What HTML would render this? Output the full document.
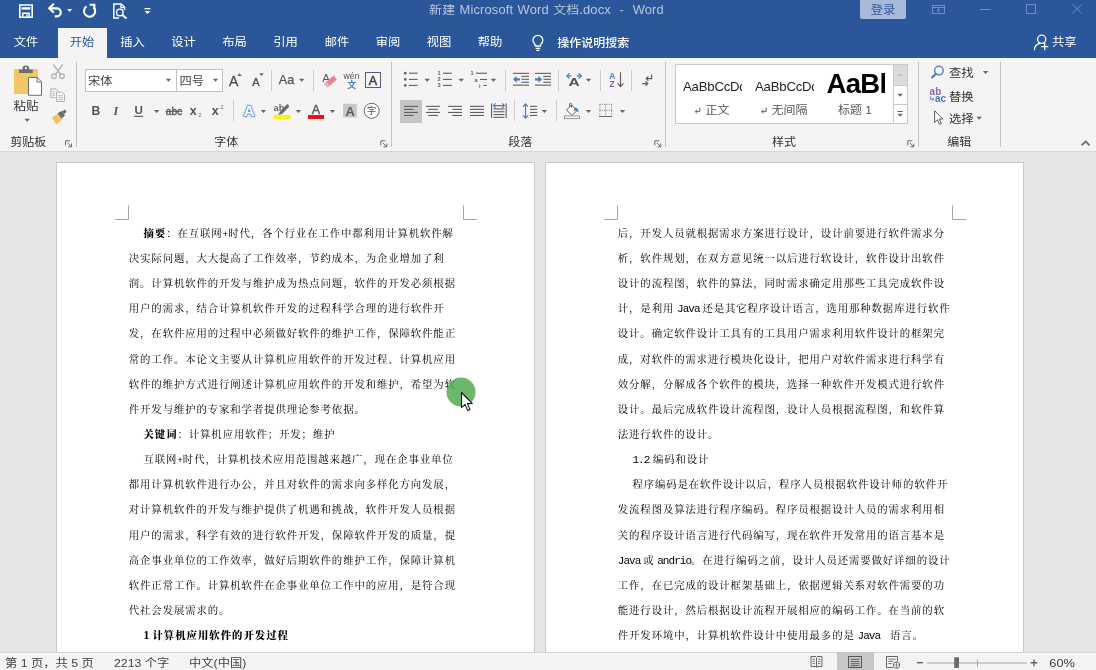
<!DOCTYPE html>
<html lang="zh-CN"><head><meta charset="utf-8"><title>新建 Microsoft Word 文档.docx - Word</title>
<style>
*{box-sizing:border-box;margin:0;padding:0}
html,body{width:1096px;height:670px;overflow:hidden;background:#e6e6e6}
body{font-family:"Liberation Sans","Noto Sans CJK SC",sans-serif;font-size:12px;color:#444;position:relative}
#app{position:absolute;left:0;top:0;width:1096px;height:670px;overflow:hidden}
#app div,#app svg{position:absolute;white-space:nowrap}
#txt{left:0;top:0;width:1096px;height:670px;will-change:transform}
#titlebar{left:0;top:0;width:1096px;height:58px;background:#2b579a}
#ribbon{left:0;top:58px;width:1096px;height:93px;background:#f5f3f4}
#rline{left:0;top:151px;width:1096px;height:1px;background:#d8d6d7}
#doc{left:0;top:152px;width:1096px;height:500px;background:#e6e6e6}
#status{left:0;top:652px;width:1096px;height:18px;background:#f5f3f4;border-top:1px solid #d6d4d5}
.page{background:#fff;border:1px solid #c8c8c8}
.t{font-size:12.3px;line-height:16px;height:16px;color:#444;transform:scaleY(0.92);transform-origin:50% 50%}
.c{text-align:center}
.w{color:#fff}
.ln{font-family:"Liberation Mono","Noto Serif CJK SC",serif;font-size:10.4px;letter-spacing:0.89px;line-height:16px;height:16px;color:#000}
.ln b{font-weight:900;letter-spacing:0.98px}
.ln b i{font-family:"Liberation Serif",serif;font-size:11.6px;font-weight:700;letter-spacing:0;word-spacing:0.4px}
.ln i{font-style:normal;font-size:11px;letter-spacing:-0.975px;word-spacing:-2.8px}
.vsep{width:1px;background:#c9c7c8}
#ov{left:0;top:0;pointer-events:none}
#ov text{font-family:"Liberation Sans","Noto Sans CJK SC",sans-serif}
</style></head>
<body><div id="app">
<div id="titlebar"></div>
<div style="left:58px;top:28px;width:49px;height:30px;background:#f5f3f4"></div>
<div style="left:860px;top:0;width:46px;height:19px;background:#a8bad8;border-radius:0 0 2px 2px"></div>
<div id="ribbon"></div><div id="rline"></div>
<div style="left:85px;top:69px;width:91.5px;height:23px;background:#fff;border:1px solid #c4c2c3"></div>
<div style="left:176px;top:69px;width:47px;height:23px;background:#fff;border:1px solid #c4c2c3"></div>
<div style="left:675px;top:64px;width:232.5px;height:59.5px;background:#fff;border:1px solid #cbc9ca"></div>
<div style="left:893px;top:64px;width:14.5px;height:22px;background:#dcdadb;border:1px solid #cbc9ca"></div>
<div style="left:893px;top:85px;width:14.5px;height:20px;background:#fff;border:1px solid #cbc9ca"></div>
<div style="left:893px;top:104px;width:14.5px;height:19.5px;background:#fff;border:1px solid #cbc9ca"></div>
<div id="doc"></div>
<div class="page" style="left:56px;top:162px;width:479px;height:500px"></div>
<div class="page" style="left:545px;top:162px;width:479px;height:500px"></div>
<div id="status"></div>
<div style="left:836.5px;top:652px;width:37.5px;height:18px;background:#c8c6c7"></div>
<div id="txt">
<div class="t c" style="left:346.5px;width:400px;top:2px;color:#b9c6de;font-size:12.9px;letter-spacing:0.16px;word-spacing:0.6px">新建 Microsoft Word 文档.docx &nbsp;- &nbsp;Word</div>
<div class="t c " style="left:843px;top:1.8px;width:80px;color:#36599a;font-size:12.3px">登录</div>
<div class="t c w" style="left:-14px;top:34px;width:80px;">文件</div>
<div class="t c " style="left:42px;top:34px;width:80px;color:#2b579a">开始</div>
<div class="t c w" style="left:92.5px;top:34px;width:80px;">插入</div>
<div class="t c w" style="left:143.5px;top:34px;width:80px;">设计</div>
<div class="t c w" style="left:194.5px;top:34px;width:80px;">布局</div>
<div class="t c w" style="left:245.5px;top:34px;width:80px;">引用</div>
<div class="t c w" style="left:297px;top:34px;width:80px;">邮件</div>
<div class="t c w" style="left:348px;top:34px;width:80px;">审阅</div>
<div class="t c w" style="left:399px;top:34px;width:80px;">视图</div>
<div class="t c w" style="left:450px;top:34px;width:80px;">帮助</div>
<div class="t c w" style="left:543.3px;top:35.1px;width:100px;font-weight:500;font-size:12px">操作说明搜索</div>
<div class="t c w" style="left:1024.3px;top:34px;width:80px;">共享</div>
<div class="t c " style="left:-14px;top:97.8px;width:80px;font-size:12.5px;color:#333">粘贴</div>
<div class="t c " style="left:-11.7px;top:134px;width:80px;font-size:12px;color:#333">剪贴板</div>
<div class="t " style="left:88px;top:73.3px;font-size:12.3px;color:#444">宋体</div>
<div class="t " style="left:179.5px;top:73.3px;font-size:12.3px;color:#444">四号</div>
<div class="t c " style="left:186.3px;top:134px;width:80px;font-size:12px;color:#333">字体</div>
<div class="t c " style="left:480.2px;top:134px;width:80px;font-size:12px;color:#333">段落</div>
<div style="left:683px;top:78px;width:58.6px;height:18px;overflow:hidden;font-size:13.2px;line-height:18px;color:#262626;letter-spacing:-0.22px">AaBbCcDd</div>
<div style="left:755px;top:78px;width:58.6px;height:18px;overflow:hidden;font-size:13.2px;line-height:18px;color:#262626;letter-spacing:-0.22px">AaBbCcDd</div>
<div style="left:826.5px;top:66px;width:58.3px;height:36px;overflow:hidden;font-size:27.5px;line-height:36px;font-weight:bold;color:#000;letter-spacing:-0.7px">AaBb</div>
<div class="t " style="left:705.4px;top:102.1px;font-size:12px;color:#555">正文</div>
<div class="t " style="left:771.4px;top:102.1px;font-size:12px;color:#555">无间隔</div>
<div class="t " style="left:838px;top:102.1px;font-size:12px;color:#555">标题 1</div>
<div class="t c " style="left:744px;top:134px;width:80px;font-size:12px;color:#333">样式</div>
<div class="t " style="left:949px;top:65.3px;font-size:12.3px;color:#333">查找</div>
<div class="t " style="left:949px;top:88.5px;font-size:12.3px;color:#333">替换</div>
<div class="t " style="left:949px;top:110.7px;font-size:12.3px;color:#333">选择</div>
<div class="t c " style="left:919.3px;top:134px;width:80px;font-size:12px;color:#333">编辑</div>
<div class="ln" style="left:143.4px;top:226px"><b>摘要</b>：在互联网<i style="font-size:9.4px;letter-spacing:-0.015px">+</i>时代，各个行业在工作中都利用计算机软件解</div>
<div class="ln" style="left:128.8px;top:251px">决实际问题，大大提高了工作效率，节约成本，为企业增加了利</div>
<div class="ln" style="left:128.8px;top:276px">润。计算机软件的开发与维护成为热点问题，软件的开发必须根据</div>
<div class="ln" style="left:128.8px;top:301px">用户的需求，结合计算机软件开发的过程科学合理的进行软件开</div>
<div class="ln" style="left:128.8px;top:326px">发，在软件应用的过程中必须做好软件的维护工作，保障软件能正</div>
<div class="ln" style="left:128.8px;top:352px">常的工作。本论文主要从计算机应用软件的开发过程、计算机应用</div>
<div class="ln" style="left:128.8px;top:377px">软件的维护方式进行阐述计算机应用软件的开发和维护，希望为软</div>
<div class="ln" style="left:128.8px;top:402px">件开发与维护的专家和学者提供理论参考依据。</div>
<div class="ln" style="left:143.4px;top:427px"><b>关键词</b>：计算机应用软件；开发；维护</div>
<div class="ln" style="left:143.4px;top:452px">互联网<i style="font-size:9.4px;letter-spacing:-0.015px">+</i>时代，计算机技术应用范围越来越广，现在企事业单位</div>
<div class="ln" style="left:128.8px;top:477px">都用计算机软件进行办公，并且对软件的需求向多样化方向发展，</div>
<div class="ln" style="left:128.8px;top:502px">对计算机软件的开发与维护提供了机遇和挑战，软件开发人员根据</div>
<div class="ln" style="left:128.8px;top:528px">用户的需求，科学有效的进行软件开发，保障软件开发的质量，提</div>
<div class="ln" style="left:128.8px;top:553px">高企事业单位的工作效率，做好后期软件的维护工作，保障计算机</div>
<div class="ln" style="left:128.8px;top:578px">软件正常工作。计算机软件在企事业单位工作中的应用，是符合现</div>
<div class="ln" style="left:128.8px;top:603px">代社会发展需求的。</div>
<div class="ln" style="left:143.4px;top:628px"><b><i>1 </i>计算机应用软件的开发过程</b></div>
<div class="ln" style="left:617.8px;top:226px">后，开发人员就根据需求方案进行设计，设计前要进行软件需求分</div>
<div class="ln" style="left:617.8px;top:251px">析，软件规划，在双方意见统一以后进行软设计，软件设计出软件</div>
<div class="ln" style="left:617.8px;top:276px">设计的流程图，软件的算法，同时需求确定用那些工具完成软件设</div>
<div class="ln" style="left:617.8px;top:301px">计，是利用<i> Java </i>还是其它程序设计语言，选用那种数据库进行软件</div>
<div class="ln" style="left:617.8px;top:326px">设计。确定软件设计工具有的工具用户需求利用软件设计的框架完</div>
<div class="ln" style="left:617.8px;top:352px">成，对软件的需求进行模块化设计，把用户对软件需求进行科学有</div>
<div class="ln" style="left:617.8px;top:377px">效分解，分解成各个软件的模块，选择一种软件开发模式进行软件</div>
<div class="ln" style="left:617.8px;top:402px">设计。最后完成软件设计流程图，设计人员根据流程图，和软件算</div>
<div class="ln" style="left:617.8px;top:427px">法进行软件的设计。</div>
<div class="ln" style="left:632.4px;top:452px"><i style="word-spacing:-2px">1.2 </i>编码和设计</div>
<div class="ln" style="left:632.4px;top:477px">程序编码是在软件设计以后，程序人员根据软件设计师的软件开</div>
<div class="ln" style="left:617.8px;top:502px">发流程图及算法进行程序编码。程序员根据设计人员的需求利用相</div>
<div class="ln" style="left:617.8px;top:528px">关的程序设计语言进行代码编写，现在软件开发常用的语言基本是</div>
<div class="ln" style="left:617.8px;top:553px"><i>Java </i>或<i> andrio</i>。在进行编码之前，设计人员还需要做好详细的设计</div>
<div class="ln" style="left:617.8px;top:578px">工作，在已完成的设计框架基础上，依据逻辑关系对软件需要的功</div>
<div class="ln" style="left:617.8px;top:603px">能进行设计，然后根据设计流程开展相应的编码工作。在当前的软</div>
<div class="ln" style="left:617.8px;top:628px">件开发环境中，计算机软件设计中使用最多的是<i> Java </i>&nbsp;语言。</div>
<div class="t " style="left:5px;top:654.8px;font-size:12.3px;color:#444">第 1 页，共 5 页</div>
<div class="t " style="left:114px;top:654.8px;font-size:12.3px;color:#444">2213 个字</div>
<div class="t " style="left:189px;top:654.8px;font-size:12.3px;color:#444">中文(中国)</div>
<div class="t " style="left:1049.3px;top:654.6px;font-size:12.8px;color:#3a3a3a">60%</div>
<svg id="ov" width="1096" height="670" viewBox="0 0 1096 670">
<g fill="none" stroke="#fff" stroke-width="1.6"><path d="M19.8 5 H32.2 V17.2 H19.8 Z"/><path d="M21.6 8.4 H30.4" stroke-width="2.4"/><path d="M22.8 17.2 V13.2 H29.2 V17.2" stroke-width="1.5"/></g>
<rect x="26.2" y="14.4" width="1.5" height="2.4" fill="#fff"/>
<g fill="none" stroke="#fff" stroke-width="2.2" stroke-linecap="butt"><path d="M53.8 3.8 L49.3 8.3 L53.8 12.8"/><path d="M49.8 8.3 H56.8 a4 4 0 0 1 0 8 H54.8"/></g>
<path d="M67.1 9.1 h5 l-2.5 2.8 z" fill="#fff"/>
<g fill="none" stroke="#fff" stroke-width="2"><path d="M86.6 6.4 A5.6 5.6 0 1 0 93.6 7.2"/><path d="M89.6 4.8 H94.4 V9.6"/></g>
<g fill="none" stroke="#fff" stroke-width="1.4"><path d="M119 18 H113.8 V4 H121.3 L124.6 7.3 V10"/><path d="M121 4 V7.6 H124.6"/><circle cx="119.8" cy="12.4" r="3.3"/><path d="M122.3 14.9 L126.6 18.6" stroke-width="2"/></g>
<rect x="144.6" y="8" width="5.8" height="1.3" fill="#fff"/>
<path d="M144.6 11 h5.8 l-2.9 3 z" fill="#fff"/>
<g fill="none" stroke="#fff" stroke-width="1.3"><path d="M535.3 46 C535.3 43.8 533 43 533 40.2 A4.9 4.9 0 0 1 542.8 40.2 C542.8 43 540.5 43.8 540.5 46 Z"/><path d="M535.6 48.3 H540.2 M536.3 50.4 H539.5"/></g>
<g fill="none" stroke="#708cc0" stroke-width="1"><rect x="932.5" y="5.5" width="12" height="8"/><path d="M932.5 7.5 H944.5"/><path d="M938.5 12.5 V9 M936.7 10.6 L938.5 8.8 L940.3 10.6"/></g>
<rect x="980" y="9" width="10.5" height="1" fill="#708cc0"/>
<rect x="1026.5" y="4.5" width="9" height="9" fill="none" stroke="#708cc0" stroke-width="1"/>
<path d="M1072.6 4.3 L1081.8 13.5 M1081.8 4.3 L1072.6 13.5" stroke="#708cc0" stroke-width="1" fill="none"/>
<g fill="none" stroke="#fff" stroke-width="1.3"><circle cx="1041.7" cy="39.3" r="4.1"/><path d="M1034.3 50.2 C1034.3 46 1037.2 43.4 1040.5 43.4"/><path d="M1044.7 43 V50.2 M1041.1 46.6 H1048.3"/></g>
<rect x="76" y="62" width="1" height="85" fill="#c3c1c2"/>
<rect x="391" y="62" width="1" height="85" fill="#c3c1c2"/>
<rect x="665" y="62" width="1" height="85" fill="#c3c1c2"/>
<rect x="918" y="62" width="1" height="85" fill="#c3c1c2"/>
<rect x="1000" y="62" width="1" height="85" fill="#c3c1c2"/>
<rect x="14" y="69" width="24" height="25" rx="1" fill="#f0c766"/>
<path d="M19 73 V69.6 H22.6 V68.2 Q22.6 65.6 25.9 65.6 Q29.2 65.6 29.2 68.2 V69.6 H32.8 V73 Z" fill="#6d6d6d"/><rect x="24.9" y="67.2" width="2" height="1.9" fill="#f5f3f4"/>
<path d="M28.5 77.5 H37.2 L41.5 81.8 V95.3 H28.5 Z" fill="#fff" stroke="#6d6d6d" stroke-width="1"/><path d="M37 77.6 V82 H41.4" fill="none" stroke="#6d6d6d" stroke-width="1"/>
<path d="M24.5 118.8 h5.4 l-2.7 3 z" fill="#666"/>
<g fill="none" stroke="#b4b2b3" stroke-width="1.3"><path d="M53.3 64.5 L61 75 M62.7 64.5 L55 75"/><circle cx="54" cy="76.2" r="2.3"/><circle cx="62" cy="76.2" r="2.3"/></g>
<g fill="none" stroke="#b4b2b3" stroke-width="1"><path d="M55.5 97.5 H50.8 V88.8 H56 L58.5 91.3"/><path d="M56.5 92 H61.8 L64.5 94.7 V101.5 H56.5 Z"/><path d="M52.4 91.3 H55.2 M52.4 93.4 H55 M52.4 95.5 H55 M58.2 95.6 H62.8 M58.2 97.6 H62.8 M58.2 99.6 H62.8" stroke-width="0.8"/></g>
<g><path d="M52 117.5 L58.3 113.6 L62.4 119.4 L56.2 124.4 Z" fill="#ecc465"/><path d="M57.6 113.2 L61.4 110.9 L65 115.6 L61.6 118.6 Z" fill="#6d6d6d"/><path d="M61.8 111.4 L65 109.6 L66.6 111.7 L64 114.2 Z" fill="#6d6d6d"/></g>
<g transform="translate(65 140.3)" fill="none" stroke="#6a6a6a" stroke-width="1"><path d="M0.5 5 V0.5 H5"/><path d="M2.5 2.5 L6 6"/><path d="M6.5 3.2 V6.5 H3.2" /></g>
<path d="M165.8 78.8 h5.4 l-2.7 3 z" fill="#666"/>
<path d="M212.8 78.8 h5.4 l-2.7 3 z" fill="#666"/>
<text x="229" y="86.2" font-size="14" fill="#505050" stroke="#505050" stroke-width="0.3">A</text>
<path d="M237.2 76 h4.6 l-2.3 -2.8 z" fill="#666"/>
<text x="252.2" y="86.2" font-size="11" fill="#505050" stroke="#505050" stroke-width="0.3">A</text>
<path d="M259.2 73.2 h4.6 l-2.3 2.8 z" fill="#666"/>
<rect x="271" y="70" width="1" height="21" fill="#cdcbcc"/>
<text x="278.8" y="84.2" font-size="12.6" fill="#555" stroke="#555" stroke-width="0.25">Aa</text>
<path d="M299 78.8 h5.4 l-2.7 3 z" fill="#666"/>
<rect x="313" y="70" width="1" height="21" fill="#cdcbcc"/>
<text x="322.2" y="81.6" font-size="11.5" fill="#555">A</text>
<g transform="rotate(-40 330.5 81.5)"><rect x="324.3" y="79" width="12.4" height="5.2" rx="0.8" fill="#e8848d"/><rect x="324.3" y="79" width="3" height="5.2" fill="#f2b3b8"/></g>
<text x="343.4" y="79.3" font-size="8.6" fill="#555" textLength="16" lengthAdjust="spacingAndGlyphs">wén</text>
<text x="347.3" y="88" font-size="8.8" font-weight="bold" fill="#4a7cb8">文</text>
<rect x="365.5" y="72.5" width="15" height="15" fill="none" stroke="#50617f" stroke-width="1"/>
<text x="373" y="85.3" font-size="12.5" text-anchor="middle" fill="#484848" stroke="#484848" stroke-width="0.5">A</text>
<text x="91.4" y="115" font-size="12.2" font-weight="bold" fill="#555">B</text>
<text x="113.6" y="115" font-size="12.2" font-weight="bold" font-style="italic" fill="#555" style="font-family:Liberation Serif,serif">I</text>
<text x="134.4" y="114.4" font-size="11.6" font-weight="bold" fill="#555">U</text><rect x="134" y="115.8" width="9.2" height="1.1" fill="#555"/>
<path d="M153.9 109.9 h5.4 l-2.7 3 z" fill="#666"/>
<text x="165.8" y="115" font-size="10.8" fill="#555" stroke="#555" stroke-width="0.35" textLength="16.4" lengthAdjust="spacingAndGlyphs">abc</text><rect x="165.4" y="110.9" width="17.2" height="0.9" fill="#555"/>
<text x="189.8" y="115.2" font-size="12.5" font-weight="bold" fill="#555">x</text><text x="198.2" y="117.4" font-size="6" fill="#4a7cb8">2</text>
<text x="211.8" y="115.2" font-size="12.5" font-weight="bold" fill="#555">x</text><text x="220.2" y="109.4" font-size="6" fill="#4a7cb8">2</text>
<rect x="233" y="100" width="1" height="21" fill="#cdcbcc"/>
<text x="249.2" y="116.2" font-size="15" font-weight="bold" text-anchor="middle" fill="#fff" stroke="#d3e3f6" stroke-width="3.6" stroke-linejoin="round">A</text>
<text x="249.2" y="116.2" font-size="15" font-weight="bold" text-anchor="middle" fill="#fff" stroke="#6496d4" stroke-width="1.7" stroke-linejoin="round" paint-order="stroke">A</text>
<path d="M260.7 109.9 h5.4 l-2.7 3 z" fill="#666"/>
<text x="273.6" y="110.6" font-size="9.2" font-weight="bold" fill="#666">ab</text>
<path d="M278.3 114.3 L280.3 111.5 L286.2 105 Q287.6 103.8 288.6 104.9 Q289.6 106 288.6 107.2 L282.6 113.4 L279.6 115 Z" fill="#6a6a6a"/>
<rect x="273.7" y="114.8" width="16.8" height="4.4" fill="#f7f01a"/>
<path d="M295.7 109.9 h5.4 l-2.7 3 z" fill="#666"/>
<text x="316" y="114.2" font-size="12.6" text-anchor="middle" fill="#555" stroke="#555" stroke-width="0.35">A</text>
<rect x="308" y="115" width="16" height="4" fill="#e8141c"/>
<path d="M329.8 109.9 h5.4 l-2.7 3 z" fill="#666"/>
<rect x="343.2" y="103.8" width="13.6" height="13.7" fill="#c8c6c7"/>
<text x="350" y="115.6" font-size="12.8" font-weight="bold" text-anchor="middle" fill="#5a5a5a">A</text>
<circle cx="371.7" cy="110.8" r="7.5" fill="#fff" stroke="#666" stroke-width="1"/>
<text x="371.7" y="114.2" font-size="9.3" text-anchor="middle" fill="#555">字</text>
<g transform="translate(380.3 140.3)" fill="none" stroke="#6a6a6a" stroke-width="1"><path d="M0.5 5 V0.5 H5"/><path d="M2.5 2.5 L6 6"/><path d="M6.5 3.2 V6.5 H3.2" /></g>
<circle cx="405.3" cy="73.2" r="1.35" fill="#50648c"/><rect x="409" y="72.65" width="8.6" height="1.1" fill="#5f5f5f"/>
<circle cx="405.3" cy="79.4" r="1.35" fill="#50648c"/><rect x="409" y="78.85" width="8.6" height="1.1" fill="#5f5f5f"/>
<circle cx="405.3" cy="85.4" r="1.35" fill="#50648c"/><rect x="409" y="84.85" width="8.6" height="1.1" fill="#5f5f5f"/>
<path d="M424.5 78.8 h5.4 l-2.7 3 z" fill="#666"/>
<text x="437.4" y="75.2" font-size="5.6" font-weight="bold" fill="#50648c">1</text><rect x="443" y="72.65" width="8.9" height="1.1" fill="#5f5f5f"/>
<text x="437.4" y="81.4" font-size="5.6" font-weight="bold" fill="#50648c">2</text><rect x="443" y="78.85" width="8.9" height="1.1" fill="#5f5f5f"/>
<text x="437.4" y="87.4" font-size="5.6" font-weight="bold" fill="#50648c">3</text><rect x="443" y="84.85" width="8.9" height="1.1" fill="#5f5f5f"/>
<path d="M458.5 78.8 h5.4 l-2.7 3 z" fill="#666"/>
<text x="470.6" y="75.4" font-size="5.6" font-weight="bold" fill="#50648c">1</text><rect x="476" y="72.7" width="11" height="1.1" fill="#5f5f5f"/>
<text x="474.6" y="81.6" font-size="5.6" font-weight="bold" fill="#50648c">a</text><rect x="480" y="78.9" width="7" height="1.1" fill="#5f5f5f"/>
<text x="479" y="87.6" font-size="5.6" font-weight="bold" fill="#50648c">i</text><rect x="483.4" y="84.9" width="3.6" height="1.1" fill="#5f5f5f"/>
<path d="M490.7 78.8 h5.4 l-2.7 3 z" fill="#666"/>
<rect x="505" y="70" width="1" height="21" fill="#cdcbcc"/>
<rect x="513" y="72.8" width="16" height="1.1" fill="#5f5f5f"/><rect x="513" y="84.6" width="16" height="1.1" fill="#5f5f5f"/>
<rect x="521.4" y="75.8" width="7.6" height="1.1" fill="#5f5f5f"/>
<rect x="521.4" y="78.7" width="7.6" height="1.1" fill="#5f5f5f"/>
<rect x="521.4" y="81.7" width="7.6" height="1.1" fill="#5f5f5f"/>
<path d="M513 79.3 l3.6 -3.4 v2.3 h3.4 v2.2 h-3.4 v2.3 z" fill="#4a7cb8"/>
<rect x="535" y="72.8" width="16" height="1.1" fill="#5f5f5f"/><rect x="535" y="84.6" width="16" height="1.1" fill="#5f5f5f"/>
<rect x="543.4" y="75.8" width="7.6" height="1.1" fill="#5f5f5f"/>
<rect x="543.4" y="78.7" width="7.6" height="1.1" fill="#5f5f5f"/>
<rect x="543.4" y="81.7" width="7.6" height="1.1" fill="#5f5f5f"/>
<path d="M542 79.3 l-3.6 -3.4 v2.3 h-3.4 v2.2 h3.4 v2.3 z" fill="#4a7cb8"/>
<rect x="558" y="70" width="1" height="21" fill="#cdcbcc"/>
<text x="574" y="86" font-size="12.4" text-anchor="middle" fill="#555" font-weight="bold" transform="translate(574 0) scale(1.25 0.82) translate(-574 19)">A</text>
<g fill="none" stroke="#4a7cb8" stroke-width="1.2"><path d="M569.6 73.2 L566.9 75.9 L569.6 78.6 M567 75.9 H571.4"/><path d="M578.6 73.2 L581.3 75.9 L578.6 78.6 M581.2 75.9 H576.8"/></g>
<path d="M585.8 78.8 h5.4 l-2.7 3 z" fill="#666"/>
<rect x="600" y="70" width="1" height="21" fill="#cdcbcc"/>
<text x="609.2" y="79.2" font-size="8.4" font-weight="bold" fill="#4a7cb8">A</text>
<text x="609.5" y="87.2" font-size="8.4" font-weight="bold" fill="#8a5aa6">Z</text>
<path d="M620.5 72.3 V86.4 M617.6 83.3 L620.5 86.6 L623.4 83.3" fill="none" stroke="#5a5a5a" stroke-width="1.1"/>
<rect x="631" y="70" width="1" height="21" fill="#cdcbcc"/>
<g fill="none" stroke="#5a5a5a" stroke-width="1.1"><path d="M651.6 74.6 V78.6 H646.4 M648.4 76.4 L646.2 78.6 L648.4 80.8"/><path d="M642.3 83.6 H647.6 M645.6 81.4 L647.8 83.6 L645.6 85.8"/></g>
<rect x="400" y="100" width="22" height="23" fill="#c6c4c5"/>
<rect x="404" y="105.8" width="14" height="1.1" fill="#5f5f5f"/>
<rect x="404" y="108.8" width="9.6" height="1.1" fill="#5f5f5f"/>
<rect x="404" y="111.9" width="14" height="1.1" fill="#5f5f5f"/>
<rect x="404" y="114.9" width="9.6" height="1.1" fill="#5f5f5f"/>
<rect x="426" y="105.8" width="14" height="1.1" fill="#5f5f5f"/>
<rect x="428.2" y="108.8" width="9.6" height="1.1" fill="#5f5f5f"/>
<rect x="426" y="111.9" width="14" height="1.1" fill="#5f5f5f"/>
<rect x="428.2" y="114.9" width="9.6" height="1.1" fill="#5f5f5f"/>
<rect x="448" y="105.8" width="14" height="1.1" fill="#5f5f5f"/>
<rect x="452.4" y="108.8" width="9.6" height="1.1" fill="#5f5f5f"/>
<rect x="448" y="111.9" width="14" height="1.1" fill="#5f5f5f"/>
<rect x="452.4" y="114.9" width="9.6" height="1.1" fill="#5f5f5f"/>
<rect x="470" y="105.8" width="14" height="1.1" fill="#5f5f5f"/>
<rect x="470" y="108.8" width="14" height="1.1" fill="#5f5f5f"/>
<rect x="470" y="111.9" width="14" height="1.1" fill="#5f5f5f"/>
<rect x="470" y="114.9" width="14" height="1.1" fill="#5f5f5f"/>
<rect x="491" y="103.4" width="1.1" height="14.6" fill="#5f5f5f"/><rect x="505.6" y="103.4" width="1.1" height="14.6" fill="#5f5f5f"/>
<path d="M493.6 105.6 H504.2 M495.6 103.4 L493.4 105.6 L495.6 107.8 M502.2 103.4 L504.4 105.6 L502.2 107.8" fill="none" stroke="#4a7cb8" stroke-width="1.1"/>
<rect x="493.4" y="108.4" width="11" height="1.1" fill="#5f5f5f"/>
<rect x="493.4" y="111.2" width="11" height="1.1" fill="#5f5f5f"/>
<rect x="493.4" y="114" width="11" height="1.1" fill="#5f5f5f"/>
<rect x="493.4" y="116.8" width="11" height="1.1" fill="#5f5f5f"/>
<rect x="514" y="100" width="1" height="21" fill="#cdcbcc"/>
<path d="M525.5 104 V118 M523 106.6 L525.5 103.8 L528 106.6 M523 115.4 L525.5 118.2 L528 115.4" fill="none" stroke="#4a7cb8" stroke-width="1.2"/>
<rect x="530" y="105.8" width="7.2" height="1.1" fill="#5f5f5f"/>
<rect x="530" y="108.8" width="7.2" height="1.1" fill="#5f5f5f"/>
<rect x="530" y="111.9" width="7.2" height="1.1" fill="#5f5f5f"/>
<rect x="530" y="114.9" width="7.2" height="1.1" fill="#5f5f5f"/>
<path d="M541.7 109.9 h5.4 l-2.7 3 z" fill="#666"/>
<rect x="556" y="100" width="1" height="21" fill="#cdcbcc"/>
<g fill="none" stroke="#5a5a5a" stroke-width="1"><path d="M566.5 110 L571.5 105 L577 110.5 L572 115.5 Z" fill="#fff"/><path d="M571.6 107.5 V104.4 Q571.6 103.2 570.6 103.2 Q569.6 103.2 569.6 104.4 V106.6"/></g>
<path d="M575 107.6 Q578.4 108 578.8 112.6 Q577 110.4 573.6 110.6 Z" fill="#4a7cb8"/>
<rect x="564.5" y="116" width="15" height="2.6" fill="#fff" stroke="#888" stroke-width="0.9"/>
<path d="M585.8 109.9 h5.4 l-2.7 3 z" fill="#666"/>
<g stroke="#7a7a7a" stroke-width="1" stroke-dasharray="1 1.3" fill="none"><path d="M599.5 104.3 H612 M599.5 110.3 H612 M599.9 104.3 V116 M605.7 104.3 V116 M611.6 104.3 V116"/></g>
<rect x="599" y="116" width="13.2" height="1" fill="#6e6e6e"/>
<path d="M619.8 109.9 h5.4 l-2.7 3 z" fill="#666"/>
<g transform="translate(654.3 140.3)" fill="none" stroke="#6a6a6a" stroke-width="1"><path d="M0.5 5 V0.5 H5"/><path d="M2.5 2.5 L6 6"/><path d="M6.5 3.2 V6.5 H3.2" /></g>
<path d="M699.8 107.6 V111.6 H695.2 M697 109.8 L695.2 111.6 L697 113.4" fill="none" stroke="#666" stroke-width="1"/>
<path d="M766.2 107.6 V111.6 H761.6 M763.4 109.8 L761.6 111.6 L763.4 113.4" fill="none" stroke="#666" stroke-width="1"/>
<path d="M897.9 76 h4.6 l-2.3 -2.6 z" fill="#bbb"/>
<path d="M897.5 93.7 h5.4 l-2.7 3 z" fill="#666"/>
<rect x="897.5" y="111" width="5.4" height="1" fill="#666"/>
<path d="M897.5 113.7 h5.4 l-2.7 3 z" fill="#666"/>
<g transform="translate(907.3 140.3)" fill="none" stroke="#6a6a6a" stroke-width="1"><path d="M0.5 5 V0.5 H5"/><path d="M2.5 2.5 L6 6"/><path d="M6.5 3.2 V6.5 H3.2" /></g>
<circle cx="938.9" cy="70.6" r="4.3" fill="#fff" stroke="#5b8bc8" stroke-width="1.6"/><path d="M935.8 73.9 L932.2 77.4" stroke="#6a82a8" stroke-width="2.3" stroke-linecap="round"/>
<path d="M982.9 71.1 h5.4 l-2.7 3 z" fill="#666"/>
<text x="929.6" y="94.6" font-size="10" font-weight="bold" fill="#8a6c9c">ab</text>
<text x="935" y="101.6" font-size="10" font-weight="bold" fill="#4a7cb8">ac</text>
<path d="M930.4 96.4 V99.2 H934 M932.5 97.7 L934 99.2 L932.5 100.7" fill="none" stroke="#4a7cb8" stroke-width="0.9"/>
<path d="M934.6 110.8 V122.4 L937.4 119.8 L939.6 124.4 L941.4 123.6 L939.3 119.2 L942.8 119 Z" fill="#fff" stroke="#5a5a5a" stroke-width="1" stroke-linejoin="round"/>
<path d="M976.5 116.7 h5.4 l-2.7 3 z" fill="#666"/>
<path d="M1081.6 145.4 L1085.6 141.4 L1089.6 145.4" fill="none" stroke="#6a6a6a" stroke-width="1.8"/>
<path d="M115 219.5 H128.5 V205.5" fill="none" stroke="#a6a6a6" stroke-width="1"/>
<path d="M463.5 205.5 V219.5 H477" fill="none" stroke="#a6a6a6" stroke-width="1"/>
<path d="M604 219.5 H617.5 V205.5" fill="none" stroke="#a6a6a6" stroke-width="1"/>
<path d="M952.5 205.5 V219.5 H966" fill="none" stroke="#a6a6a6" stroke-width="1"/>
<circle cx="461" cy="392" r="14.5" fill="#54aa54" fill-opacity="0.85"/>
<path transform="translate(460 391)" d="M1.5 1.5 L1.5 16.6 L5 13.4 L7.7 19.6 L10 18.6 L7.4 12.6 L12.2 12.4 Z" fill="#fff" stroke="#111" stroke-width="1.1" stroke-linejoin="round"/>
<g fill="none" stroke="#666" stroke-width="1"><path d="M816.5 657.5 V667.5 M811 656.5 H816 M811 656.5 V666.5 H816 M822 656.5 H817 M822 656.5 V666.5 H817"/><path d="M812.5 659.2 H815 M812.5 661.4 H815 M812.5 663.6 H815 M818 659.2 H820.5 M818 661.4 H820.5 M818 663.6 H820.5" stroke-width="0.9"/></g>
<g fill="none" stroke="#555" stroke-width="1"><rect x="848.5" y="656.5" width="13" height="11"/><path d="M850.5 659.3 H859.5 M850.5 661.5 H859.5 M850.5 663.7 H859.5 M850.5 665.7 H859.5" stroke-width="0.9"/></g>
<g fill="none" stroke="#666" stroke-width="1"><path d="M893 667.5 H886.5 V656.5 H897.5 V661"/><path d="M888.3 659.2 H895.7 M888.3 661.4 H893 M888.3 663.6 H891.6" stroke-width="0.9"/><circle cx="896.5" cy="665" r="3.2" fill="#fff"/><path d="M893.3 665 H899.7 M896.5 661.8 V668.2" stroke-width="0.7"/></g>
<rect x="917" y="662" width="6" height="1.4" fill="#666"/>
<rect x="927" y="662.5" width="100" height="1" fill="#a5a3a4"/>
<rect x="977" y="659.5" width="1" height="7" fill="#a5a3a4"/>
<rect x="954.2" y="657.3" width="4.8" height="10.6" fill="#6a6a6a"/>
<path d="M1030.6 662.8 H1037.4 M1034 659.4 V666.2" stroke="#666" stroke-width="1.4" fill="none"/>
</svg>
</div>
</div></body></html>
